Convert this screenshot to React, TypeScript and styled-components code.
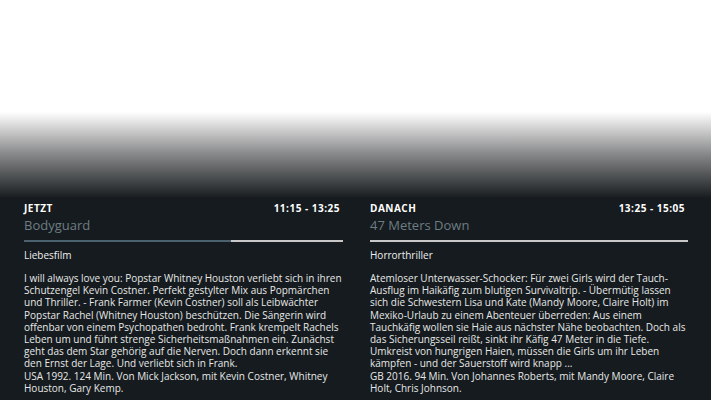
import React from "react";
import styled, { createGlobalStyle } from "styled-components";

const Global = createGlobalStyle`
  html, body { margin: 0; padding: 0; background: #ffffff; }
  body { font-family: "Open Sans", "Noto Sans", sans-serif; }
`;

const Screen = styled.div`
  width: 711px;
  height: 400px;
  overflow: hidden;
  display: flex;
  flex-direction: column;
  background: #ffffff;
`;

const Blank = styled.div`
  height: 112px;
  flex: none;
`;

const Fade = styled.div`
  height: 86px;
  flex: none;
  background: linear-gradient(to bottom, #ffffff 0%, #858687 50%, #171c1f 100%);
`;

const Panel = styled.div`
  flex: 1;
  background: #151b1e;
  display: grid;
  grid-template-columns: 319px 318px;
  column-gap: 27px;
  padding: 0 23px 0 24px;
`;

const Column = styled.div`
  display: flex;
  flex-direction: column;
  min-width: 0;
`;

const HeadRow = styled.div`
  display: flex;
  justify-content: space-between;
  align-items: baseline;
  color: #ffffff;
  font-size: 10px;
  font-weight: 700;
  letter-spacing: 0.5px;
  line-height: 14px;
  margin-top: 3px;
  padding-right: 3px;
`;

const Title = styled.div`
  color: #6e7d85;
  font-size: 13px;
  line-height: 18px;
  margin-top: 1px;
`;

const Progress = styled.div`
  height: 2px;
  margin-top: 6px;
  background: #c8c8c8;
  display: flex;
`;

const ProgressFill = styled.div`
  height: 100%;
  background: #4b616d;
`;

const Genre = styled.div`
  color: #f0f0f0;
  font-size: 10px;
  line-height: 14px;
  margin-top: 6px;
`;

const Plot = styled.div`
  color: #e8e8e8;
  font-size: 10px;
  line-height: 12.2px;
  margin-top: 10px;
`;

type Show = {
  label: string;
  time: string;
  title: string;
  progress: number;
  genre: string;
  plot: string;
  credits: string;
};

const shows: Show[] = [
  {
    label: "JETZT",
    time: "11:15 - 13:25",
    title: "Bodyguard",
    progress: 0.65,
    genre: "Liebesfilm",
    plot:
      "I will always love you: Popstar Whitney Houston verliebt sich in ihren Schutzengel Kevin Costner. Perfekt gestylter Mix aus Popmärchen und Thriller. - Frank Farmer (Kevin Costner) soll als Leibwächter Popstar Rachel (Whitney Houston) beschützen. Die Sängerin wird offenbar von einem Psychopathen bedroht. Frank krempelt Rachels Leben um und führt strenge Sicherheitsmaßnahmen ein. Zunächst geht das dem Star gehörig auf die Nerven. Doch dann erkennt sie den Ernst der Lage. Und verliebt sich in Frank.",
    credits: "USA 1992. 124 Min. Von Mick Jackson, mit Kevin Costner, Whitney Houston, Gary Kemp.",
  },
  {
    label: "DANACH",
    time: "13:25 - 15:05",
    title: "47 Meters Down",
    progress: 0,
    genre: "Horrorthriller",
    plot:
      "Atemloser Unterwasser-Schocker: Für zwei Girls wird der Tauch-Ausflug im Haikäfig zum blutigen Survivaltrip. - Übermütig lassen sich die Schwestern Lisa und Kate (Mandy Moore, Claire Holt) im Mexiko-Urlaub zu einem Abenteuer überreden: Aus einem Tauchkäfig wollen sie Haie aus nächster Nähe beobachten. Doch als das Sicherungsseil reißt, sinkt ihr Käfig 47 Meter in die Tiefe. Umkreist von hungrigen Haien, müssen die Girls um ihr Leben kämpfen - und der Sauerstoff wird knapp ...",
    credits: "GB 2016. 94 Min. Von Johannes Roberts, mit Mandy Moore, Claire Holt, Chris Johnson.",
  },
];

export default function App() {
  return (
    <Screen>
      <Global />
      <Blank />
      <Fade />
      <Panel>
        {shows.map((s) => (
          <Column key={s.label}>
            <HeadRow>
              <span>{s.label}</span>
              <span>{s.time}</span>
            </HeadRow>
            <Title>{s.title}</Title>
            <Progress>
              <ProgressFill style={{ width: `${s.progress * 100}%` }} />
            </Progress>
            <Genre>{s.genre}</Genre>
            <Plot>
              {s.plot}
              <br />
              {s.credits}
            </Plot>
          </Column>
        ))}
      </Panel>
    </Screen>
  );
}
